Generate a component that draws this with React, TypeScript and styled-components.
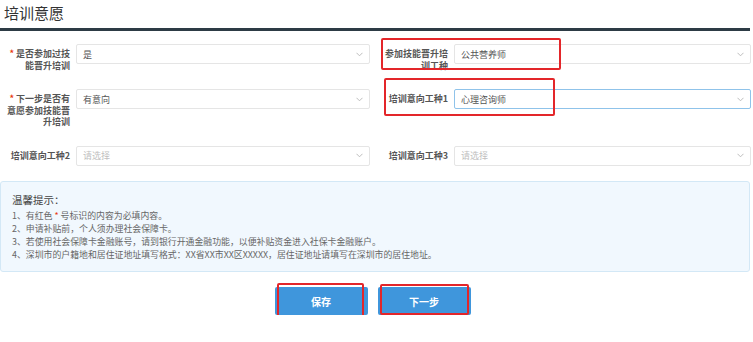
import React from 'react';
import styled, { createGlobalStyle } from 'styled-components';

const GlobalStyle = createGlobalStyle`
    body {
        margin: 0;
        background: #fff;
        font-family: 'Noto Sans CJK SC', 'Noto Sans', sans-serif;
    }
`;

interface Field {
    label: string;
    value?: string;
    required?: boolean;
    focused?: boolean;
    mark?: { left: number; top: number; width: number; height: number };
}

const fields: Field[] = [
    { label: '是否参加过技能晋升培训', value: '是', required: true },
    {
        label: '参加技能晋升培训工种',
        value: '公共营养师',
        mark: { left: 3, top: -6, width: 180, height: 32 }
    },
    { label: '下一步是否有意愿参加技能晋升培训', value: '有意向', required: true },
    {
        label: '培训意向工种1',
        value: '心理咨询师',
        focused: true,
        mark: { left: 6, top: -11, width: 171, height: 38 }
    },
    { label: '培训意向工种2' },
    { label: '培训意向工种3' }
];

const tips = [
    '2、申请补贴前，个人须办理社会保障卡。',
    '3、若使用社会保障卡金融账号，请到银行开通金融功能，以便补贴资金进入社保卡金融账户。',
    '4、深圳市的户籍地和居住证地址填写格式：XX省XX市XX区XXXXX，居住证地址请填写在深圳市的居住地址。'
];

const Chevron = () => (
    <svg width="7" height="5" viewBox="0 0 7 5">
        <path d="M0.5 0.8 L3.5 3.8 L6.5 0.8" fill="none" stroke="#b5b5b5" strokeWidth="0.9" />
    </svg>
);

const App = () => {
    return (
        <Page>
            <GlobalStyle />
            <Header>培训意愿</Header>
            <Form>
                {fields.map((f) => (
                    <Item key={f.label}>
                        <Label>
                            {f.required && <Star>*</Star>}
                            {f.label}
                        </Label>
                        <Select $focused={f.focused}>
                            <Value $empty={!f.value}>{f.value || '请选择'}</Value>
                            <Chevron />
                        </Select>
                        {f.mark && <Mark style={f.mark} />}
                    </Item>
                ))}
            </Form>
            <Tips>
                <TipsTitle>温馨提示：</TipsTitle>
                <TipLine>
                    1、有红色 <Star>*</Star>号标识的内容为必填内容。
                </TipLine>
                {tips.map((t) => (
                    <TipLine key={t}>{t}</TipLine>
                ))}
            </Tips>
            <Actions>
                <ButtonWrap>
                    <Button>保存</Button>
                    <Mark style={{ left: 2, top: -4, width: 87, height: 36 }} />
                </ButtonWrap>
                <ButtonWrap>
                    <Button>下一步</Button>
                    <Mark style={{ left: 2, top: -3, width: 89, height: 31 }} />
                </ButtonWrap>
            </Actions>
        </Page>
    );
};

export default App;

const Page = styled.div`
    width: 753px;
    box-sizing: border-box;
    padding-right: 2px;
`;

const Header = styled.div`
    height: 28px;
    line-height: 25px;
    padding-left: 4px;
    font-size: 15px;
    color: #333;
    border-bottom: 3px solid #2d3b45;
    margin-right: 1px;
`;

const Form = styled.div`
    display: grid;
    grid-template-columns: 370px 373px;
    column-gap: 8px;
    row-gap: 18px;
    margin-top: 13px;
`;

const Item = styled.div`
    position: relative;
    display: flex;
    align-items: flex-start;
    gap: 6px;
`;

const Label = styled.div`
    width: 70px;
    flex-shrink: 0;
    box-sizing: border-box;
    padding: 4px 0 0 6px;
    text-align: right;
    font-size: 9px;
    line-height: 11.5px;
    font-weight: bold;
    color: #555;
`;

const Star = styled.span`
    color: #e8380d;
    margin-right: 2px;
`;

const Select = styled.div<{ $focused?: boolean }>`
    flex: 1;
    height: 20px;
    box-sizing: border-box;
    display: flex;
    align-items: center;
    justify-content: space-between;
    padding: 0 6px;
    border: 1px solid ${({ $focused }) => ($focused ? '#8fc3ea' : '#e5e5e5')};
    border-radius: 2px;
    background: #fff;
`;

const Value = styled.span<{ $empty?: boolean }>`
    font-size: 9px;
    color: ${({ $empty }) => ($empty ? '#c0c0c0' : '#555')};
`;

const Mark = styled.div`
    position: absolute;
    box-sizing: border-box;
    border: 2px solid #e3262a;
    border-radius: 2px;
    pointer-events: none;
`;

const Tips = styled.div`
    margin-top: 15px;
    width: 750px;
    height: 91px;
    box-sizing: border-box;
    padding: 11px 11px 0;
    background: #f1f8fe;
    border: 1px solid #d3e8f6;
    border-radius: 3px;
`;

const TipsTitle = styled.div`
    font-size: 10.5px;
    line-height: 14px;
    color: #444;
    margin-bottom: 2px;
`;

const TipLine = styled.div`
    font-size: 8.9px;
    line-height: 13px;
    color: #666;
`;

const Actions = styled.div`
    display: flex;
    justify-content: center;
    gap: 10px;
    margin-top: 15px;
    padding-right: 6px;
`;

const ButtonWrap = styled.div`
    position: relative;
`;

const Button = styled.button`
    width: 93px;
    height: 28px;
    border: none;
    border-radius: 2px;
    background: #3f96dc;
    color: #fff;
    font-family: inherit;
    font-size: 10px;
    font-weight: bold;
    cursor: pointer;
`;
